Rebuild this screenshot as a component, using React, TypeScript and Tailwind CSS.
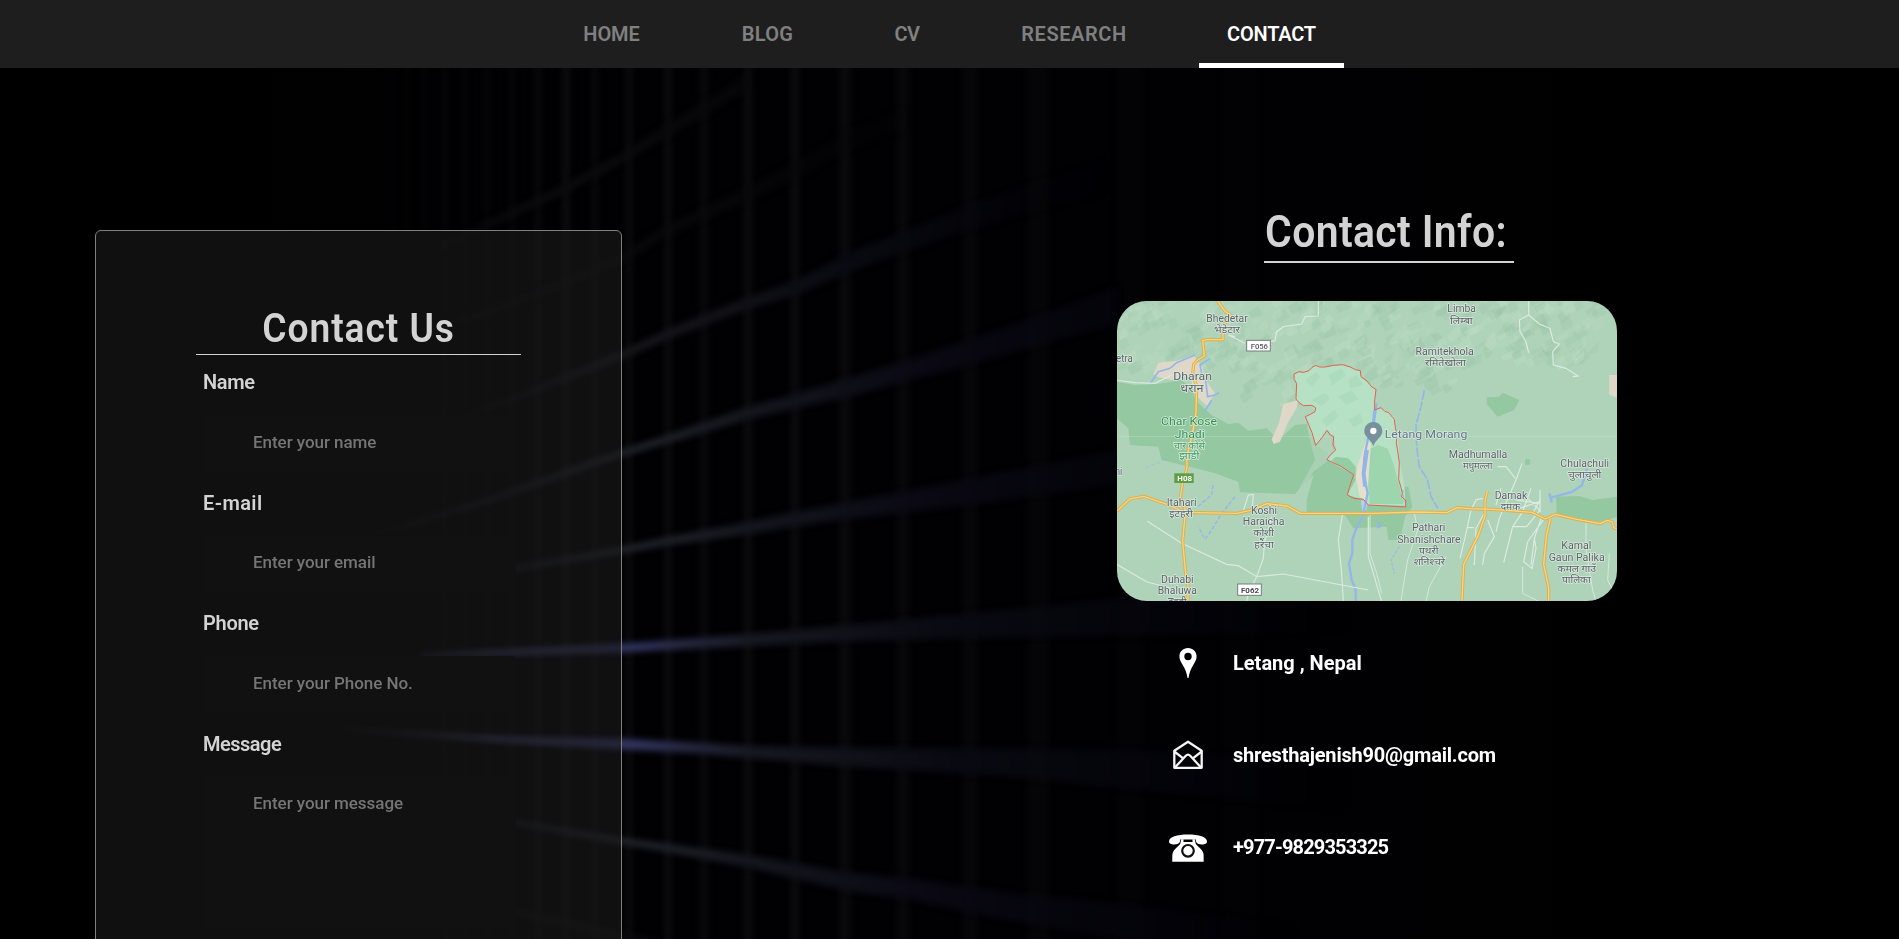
import React from "react";

type Point = [number, number, number];

const streaks: { points: Point[]; fill: string }[] = [
  { fill: "url(#beam-bright)", points: [[420, 656, 2], [515, 652, 3], [622, 648, 4], [700, 643, 5], [748, 640, 6], [850, 633, 8], [1000, 624, 13], [1120, 617, 18], [1350, 606, 26]] },
  { fill: "url(#beam-bright)", points: [[320, 727, 2], [400, 733, 2], [515, 740, 3], [622, 744, 5], [700, 748, 5], [750, 752, 6], [850, 757, 9], [1000, 762, 13], [1110, 768, 18], [1350, 785, 26]] },
  { fill: "url(#beam-mid)", points: [[490, 818, 2], [622, 841, 3], [668, 848, 4], [748, 861, 6], [850, 882, 9], [910, 889, 10], [1000, 905, 13], [1110, 920, 17], [1300, 950, 24]] },
  { fill: "url(#beam-mid)", points: [[490, 573, 2], [622, 550, 3], [668, 541, 4], [748, 528, 6], [795, 519, 7], [850, 510, 8], [950, 495, 12], [1100, 470, 16], [1300, 440, 22]] },
  { fill: "url(#beam-mid)", points: [[340, 545, 2], [480, 503, 2.5], [622, 453, 3], [668, 439, 4], [748, 413, 6], [795, 401, 7], [850, 387, 9], [905, 371, 10], [970, 352, 12], [1040, 330, 14], [1117, 305, 18]] },
  { fill: "url(#beam-soft)", points: [[440, 424, 2], [520, 396, 3], [622, 355, 4], [668, 334, 5], [748, 303, 6], [795, 288, 7], [850, 262, 9], [905, 241, 10], [970, 217, 12], [1040, 195, 14], [1110, 175, 16]] },
  { fill: "url(#beam-faint)", points: [[380, 345, 2], [480, 315, 3], [560, 285, 3], [622, 258, 4], [668, 230, 5], [748, 194, 7], [795, 170, 8], [850, 140, 9], [905, 118, 10]] },
  { fill: "url(#beam-faint)", points: [[430, 252, 2], [510, 214, 4], [570, 186, 4], [622, 158, 5], [668, 130, 6], [748, 82, 8]] },
  { fill: "url(#beam-faint)", points: [[500, 908, 3], [560, 922, 4], [622, 937, 5], [700, 955, 6]] },
];

const columns: [number, number, number][] = [
  [390, 4, 0.25], [407, 4, 0.3], [425, 4, 0.35], [445, 4, 0.45], [465, 4, 0.45], [487, 5, 0.55], [512, 5, 0.6],
  [538, 6, 0.8], [566, 7, 1], [595, 6, 0.8], [629, 6, 1], [668, 7, 0.95], [704, 9, 0.7], [748, 8, 0.9], [795, 8, 0.9],
  [845, 13, 0.7], [903, 12, 0.6], [970, 16, 0.45], [1038, 22, 0.35], [1130, 26, 0.2], [1240, 34, 0.15],
];

const beamShape = (points: Point[]) =>
  [...points.map(([x, y, r]) => `${x},${y - r}`), ...[...points].reverse().map(([x, y, r]) => `${x},${y + r}`)].join(" ");

function Backdrop() {
  return (
    <svg className="absolute inset-0 h-full w-full" viewBox="0 0 1899 939" preserveAspectRatio="none" aria-hidden="true">
      <defs>
        <linearGradient id="beam-bright" gradientUnits="userSpaceOnUse" x1="320" x2="1350" y1="0" y2="0">
          <stop offset="0" stopColor="#3c3e60" stopOpacity="0" />
          <stop offset="0.17" stopColor="#40436c" stopOpacity="0.85" />
          <stop offset="0.3" stopColor="#343766" />
          <stop offset="0.36" stopColor="#25273e" />
          <stop offset="0.42" stopColor="#171820" />
          <stop offset="0.6" stopColor="#0a0a13" />
          <stop offset="1" stopColor="#05060f" stopOpacity="0" />
        </linearGradient>
        <linearGradient id="beam-mid" gradientUnits="userSpaceOnUse" x1="340" x2="1300" y1="0" y2="0">
          <stop offset="0" stopColor="#2a2c38" stopOpacity="0" />
          <stop offset="0.28" stopColor="#282a32" />
          <stop offset="0.42" stopColor="#15171e" />
          <stop offset="0.6" stopColor="#0a0914" />
          <stop offset="1" stopColor="#06060f" stopOpacity="0" />
        </linearGradient>
        <linearGradient id="beam-soft" gradientUnits="userSpaceOnUse" x1="440" x2="1110" y1="0" y2="0">
          <stop offset="0" stopColor="#1c1c22" stopOpacity="0" />
          <stop offset="0.25" stopColor="#19181c" />
          <stop offset="0.6" stopColor="#0a0b12" />
          <stop offset="1" stopColor="#05050b" stopOpacity="0" />
        </linearGradient>
        <linearGradient id="beam-faint" gradientUnits="userSpaceOnUse" x1="380" x2="920" y1="0" y2="0">
          <stop offset="0" stopColor="#131317" stopOpacity="0" />
          <stop offset="0.35" stopColor="#0c0c0e" />
          <stop offset="1" stopColor="#060608" stopOpacity="0.2" />
        </linearGradient>
        <linearGradient id="haze" x1="0" x2="1" y1="0" y2="0">
          <stop offset="0" stopColor="#010104" stopOpacity="0" />
          <stop offset="0.25" stopColor="#010104" />
          <stop offset="0.7" stopColor="#010104" />
          <stop offset="1" stopColor="#010104" stopOpacity="0" />
        </linearGradient>
        <filter id="beam-blur" x="-5%" y="-40%" width="110%" height="180%" colorInterpolationFilters="sRGB">
          <feGaussianBlur stdDeviation="3" />
        </filter>
        <filter id="column-blur" filterUnits="userSpaceOnUse" x="300" y="0" width="1100" height="939" colorInterpolationFilters="sRGB">
          <feGaussianBlur stdDeviation="3 0.1" />
        </filter>
      </defs>
      <rect width="1899" height="939" fill="#000" />
      <rect x="220" width="1400" height="939" fill="url(#haze)" />
      <g filter="url(#column-blur)">
        {columns.map(([x, w, o]) => (
          <rect key={x} x={x - w / 2} y="40" width={w} height="899" fill="#0d0d0f" opacity={o} />
        ))}
      </g>
      {streaks.map(({ points, fill }) => (
        <polygon key={beamShape(points)} points={beamShape(points)} fill={fill} filter="url(#beam-blur)" />
      ))}
    </svg>
  );
}

function makeRelief() {
  let seed = 7;
  const next = () => {
    seed = (seed * 16807) % 2147483647;
    return seed / 2147483647;
  };
  const facets: { points: string; fill: string; opacity: number }[] = [];
  for (let i = 0; i < 380; i++) {
    const x = next() * 1430;
    const limit = x < 350 ? 220 : x < 700 ? 310 : x < 1000 ? 270 : 190;
    const y = Math.pow(next(), 1.15) * limit;
    const length = 18 + next() * 42;
    const width = 8 + next() * 18;
    const lean = -0.9 + next() * 0.5;
    const dx = Math.cos(lean) * length;
    const dy = Math.sin(lean) * length;
    facets.push({
      points: `${x},${y} ${x + dx},${y + dy} ${x + dx * 0.7 + width},${y + dy * 0.3 + width * 0.5} ${x + width * 0.6},${y + width}`,
      fill: next() > 0.5 ? "#9cc5a8" : "#bcdcc3",
      opacity: 0.2 + next() * 0.25,
    });
  }
  return facets;
}

const relief = makeRelief();

type Label = { x: number; y: number; w: number; text: string; size?: number; color?: string };

const labels: Label[] = [
  { x: 330, y: 62, w: 124, text: "Bhedetar" },
  { x: 330, y: 95, w: 78, text: "भेडेटार", size: 28 },
  { x: 22, y: 182, w: 50, text: "etra" },
  { x: 227, y: 236, w: 116, text: "Dharan", size: 34 },
  { x: 225, y: 273, w: 70, text: "धरान", size: 32 },
  { x: 216, y: 371, w: 168, text: "Char Kose", size: 34, color: "#2f9150" },
  { x: 218, y: 411, w: 90, text: "Jhadi", size: 34, color: "#2f9150" },
  { x: 217, y: 443, w: 94, text: "चार कोसे", size: 28, color: "#3f9a5d" },
  { x: 217, y: 474, w: 60, text: "झाडी", size: 28, color: "#3f9a5d" },
  { x: 5, y: 522, w: 22, text: "ni" },
  { x: 194, y: 615, w: 90, text: "Itahari" },
  { x: 192, y: 647, w: 70, text: "इटहरी", size: 30 },
  { x: 441, y: 639, w: 78, text: "Koshi" },
  { x: 440, y: 673, w: 125, text: "Haraicha" },
  { x: 440, y: 706, w: 62, text: "कोशी", size: 30 },
  { x: 441, y: 741, w: 58, text: "हरैंचा", size: 30 },
  { x: 181, y: 845, w: 98, text: "Duhabi" },
  { x: 181, y: 880, w: 118, text: "Bhaluwa" },
  { x: 181, y: 911, w: 56, text: "दुहवी", size: 30 },
  { x: 1034, y: 34, w: 86, text: "Limba" },
  { x: 1033, y: 68, w: 68, text: "लिम्बा", size: 30 },
  { x: 983, y: 161, w: 175, text: "Ramitekhola" },
  { x: 985, y: 194, w: 122, text: "रमितेखोला", size: 30 },
  { x: 927, y: 412, w: 248, text: "Letang Morang", size: 34, color: "#61758a" },
  { x: 1083, y: 471, w: 176, text: "Madhumalla" },
  { x: 1082, y: 504, w: 88, text: "मधुमल्ला", size: 30 },
  { x: 1403, y: 497, w: 146, text: "Chulachuli" },
  { x: 1403, y: 530, w: 100, text: "चुलाचुली", size: 30 },
  { x: 1182, y: 594, w: 98, text: "Damak" },
  { x: 1180, y: 627, w: 58, text: "दमक", size: 30 },
  { x: 935, y: 691, w: 100, text: "Pathari" },
  { x: 936, y: 725, w: 190, text: "Shanishchare" },
  { x: 935, y: 758, w: 58, text: "पथरी", size: 30 },
  { x: 937, y: 792, w: 94, text: "शनिश्चरे", size: 30 },
  { x: 1378, y: 745, w: 90, text: "Kamal" },
  { x: 1379, y: 779, w: 168, text: "Gaun Palika" },
  { x: 1379, y: 812, w: 116, text: "कमल गाउँ", size: 30 },
  { x: 1378, y: 846, w: 86, text: "पालिका", size: 30 },
];

function RegionMap() {
  return (
    <svg className="block h-[300px] w-[500px] rounded-[30px]" viewBox="0 0 1500 900" role="img">
      <rect width="1500" height="900" fill="#aed3b9" />
      {relief.map((f, i) => (
        <polygon key={i} points={f.points} fill={f.fill} opacity={f.opacity} />
      ))}

      <g transform="translate(-6 -3)">
        <path d="M0 245 L60 255 130 252 200 240 232 268 240 300 290 345 340 372 370 368 400 392 455 385 490 420 540 375 575 372 600 432 640 460 610 510 560 560 540 582 375 577 370 545 300 520 225 500 140 480 130 440 45 435 40 385 0 350Z" fill="#93c8a1" />
        <path d="M575 600 L600 510 640 470 720 500 760 560 880 560 892 620 870 650 855 720 820 720 815 680 715 685 690 645 575 635Z" fill="#93c8a1" />
        <path d="M575 380 L640 400 655 470 595 515 555 590 540 600 555 560 600 480Z" fill="#aed3b9" opacity=".8" />
        <path d="M130 188 L185 182 235 165 262 200 272 240 300 280 276 318 240 285 225 225 170 240 130 232 115 222Z" fill="#dfd8c9" />
        <path d="M505 312 L550 300 545 325 520 365 495 425 476 432 470 418 492 370Z" fill="#dfd8c9" />
        <path d="M537 222 L582 212 602 196 630 201 682 194 736 212 738 230 783 268 779 330 798 323 838 350 850 420 853 480 868 555 872 617 760 615 745 598 697 585 716 524 635 479 662 450 656 410 636 391 602 436 571 350 600 335 590 316 565 317 543 297 545 250Z" fill="#b7e1c5" />
        <g fill="#a8d7b8" opacity=".65">
          <path d="M570 240l35-25 10 15-25 30zM640 225l40-20 12 20-40 32zM700 240l25-15 20 30-40 10zM590 300l40-22 15 18-25 22zM670 290l40-20 20 28-36 16zM620 360l38-30 12 20-35 30zM700 360l35-20 10 26-30 16z" />
        </g>
        <path d="M762 448 L790 435 818 446 835 490 850 545 866 612 765 612 760 560Z" fill="#9dd6ae" />
        <path d="M662 470 L700 475 722 500 722 540 700 580 716 524 650 482Z" fill="#93cda4" />
        <path d="M754 420 L730 490 722 530 735 590 750 600 760 540 768 430Z" fill="#e6dfcd" />
        <path d="M738 600l20 5-4 25-12 5z" fill="#b9d2ef" />
        <g fill="none" stroke="#93b6ea" strokeWidth="5">
          <path d="M778 330 L774 370 758 420 748 470 745 520 758 580 748 625 742 650 722 690 712 720 712 760 702 790 710 840 722 870 722 905" strokeWidth="7" />
          <path d="M756 450 L746 520 750 560" strokeWidth="12" />
          <path d="M105 252 L130 215 165 205 185 188 240 165M286 175L255 195 262 230M272 240L278 290 300 285 312 278M290 300L268 336" />
          <path d="M294 555 L290 585 248 620M360 590L320 640 290 690 270 718 250 680" strokeWidth="4" strokeDasharray="12 6" />
          <path d="M92 502 L140 485 190 430 240 395" strokeWidth="2" strokeDasharray="10 8" />
        </g>
        <path d="M785 310l-8 60" stroke="#93b6ea" strokeWidth="6" />
        <path d="M788 662l12 18-14 6z" fill="#93b6ea" />
        <g fill="none" stroke="#dbeadf" strokeWidth="3.5">
          <path d="M610 0 L610 48 570 50 560 72 505 80 485 95 480 122 430 135M0 240L60 248 120 250 170 225M360 110L340 105 390 130" />
          <path d="M97 664 L200 730 335 793 370 797 425 830 505 822 760 870M0 790L96 846 190 870M425 830L445 775 448 730 470 650M425 830L400 880 395 905M682 645L670 720 680 820 685 905M385 632L400 585 415 583 412 625M760 650L760 770 775 820 800 905" />
        </g>
      </g>

      <g transform="translate(747 -3)">
        <path d="M570 590 L640 588 680 600 756 590 756 650 700 665 640 655 572 640Z" fill="#93c8a1" />
        <path d="M362 292 L400 290 410 278 460 300 445 330 395 350 362 312Z" fill="#93c8a1" />
        <path d="M730 225h30v70l-30-10z" fill="#dfd8c9" />
        <path d="M478 478h14v16h-14z" fill="#93c8a1" />
        <g fill="none" stroke="#dfeae3" strokeWidth="3.5">
          <path d="M488 0 L488 45 460 60 462 95 480 125 488 158M488 45L520 72 552 85 562 125 580 132 560 155 562 195 600 205 636 228 620 230" />
          <path d="M468 490 L450 540 400 655 390 695M395 500l25 0 28 35M350 595l-20 5-15 30-15 70-18 75M355 640l-25 45-5 110M302 683h22M365 660l20 50-30 50-5 35M405 565l-15 50M495 565l-25 70-30 45-15 60-12 48M522 570v60l-40 50-40 0M525 655l-20 60-10 80M535 655l-50 70-12 60 25 20 12-60-5-30M450 600l70 10M460 625l60-20M480 590l45 45M500 640l25-45" />
          <path d="M145 640l10 50-30 90-15 90-5 35M240 770l-50 90-10 45M12 640v120l20 60 15 60M470 800l0 80 50 25M660 670v80l20 120 10 35M730 760l-5 80 25 50" strokeWidth="2.5" />
        </g>
        <g fill="none" stroke="#93b6ea" strokeWidth="5">
          <path d="M175 270 L165 320 150 375 152 440 160 500 185 540 195 590 215 625" strokeDasharray="30 5" />
          <path d="M550 580l8 28M558 592l60-16 30-20 15-50" strokeWidth="7" />
          <path d="M110 570l5 40M100 740l-25 40 10 40" strokeWidth="3" strokeDasharray="9 5" />
        </g>
      </g>
      <path d="M0 406H1500" stroke="#cfe3d3" strokeWidth="2" opacity=".6" />

      <g fill="none" strokeLinejoin="round">
        {["#e0ae45", "#f4d68a"].map((stroke, i) => (
          <g key={stroke} stroke={stroke} strokeWidth={i ? 4 : 9.5}>
            <path d="M302 0 L325 32 345 45 322 68 318 100 318 116 270 116 257 118 262 165 244 175 230 190 227 220 239 255 237 335 226 400 210 465 210 500 196 550 190 590 203 620 203 655 197 720 205 810 213 850 213 900" />
            <path d="M0 630 L38 594 80 586 150 610 203 634 360 637 400 628 450 608 510 615 550 637 770 637 900 633 990 635 1020 620 1060 623 1130 625 1245 634 1285 654 1315 640 1380 655 1450 668 1470 658 1485 662 1490 680 1500 684" />
            <path d="M1111 570 L1104 600 1104 645 1085 700 1040 790 1035 900M1300 652L1288 705 1280 790 1295 860 1295 900" />
          </g>
        ))}
      </g>
      <path d="M531 219 L545 212 560 214 576 209 585 199 596 193 608 198 624 198 650 193 676 191 700 198 715 206 730 209 732 227 750 240 765 258 777 265 773 300 773 327 792 320 803 331 815 335 832 355 835 380 840 400 838 425 842 450 847 485 845 535 856 575 854 588 866 597 866 618 754 612 739 595 710 592 691 582 697 560 710 521 670 495 629 476 640 462 656 447 648 432 650 407 640 402 630 388 615 410 596 433 585 395 565 347 580 340 594 332 596 320 584 313 559 314 545 304 537 294 539 247 531 235Z" fill="none" stroke="#e2604f" strokeWidth="3" />

      <g fontFamily="Roboto, 'Noto Sans', sans-serif" textAnchor="middle" fontWeight="400">
        {labels.map(({ x, y, w, text, size = 30, color = "#5c6168" }) => (
          <text key={text} x={x} y={y} textLength={w} lengthAdjust="spacingAndGlyphs" fontSize={size} fill={color} stroke="#dcebe0" strokeWidth="4" strokeLinejoin="round" paintOrder="stroke">
            {text}
          </text>
        ))}
        <g fontSize="24" fontWeight="700">
          <rect x="389" y="118" width="71" height="32" fill="#fff" stroke="#777b80" strokeWidth="3" />
          <text x="427" y="143" fill="#55595e" textLength="52" lengthAdjust="spacingAndGlyphs" fontWeight="500">F056</text>
          <rect x="362" y="849" width="71" height="34" fill="#fff" stroke="#777b80" strokeWidth="3" />
          <text x="399" y="875" fill="#44484d" textLength="54" lengthAdjust="spacingAndGlyphs">F062</text>
          <rect x="172" y="517" width="58" height="29" fill="#5f9e44" />
          <text x="203" y="541" fill="#fff" textLength="44" lengthAdjust="spacingAndGlyphs">H08</text>
        </g>
      </g>
      <path d="M769 363c-16 0-27 12-27 27 0 19 20 24 27 46 7-22 27-27 27-46 0-15-11-27-27-27z" fill="#76909c" />
      <circle cx="769" cy="390" r="9.5" fill="#fff" />
    </svg>
  );
}

const PinIcon = () => (
  <svg width="18" height="30" viewBox="0 0 18 30">
    <path fillRule="evenodd" fill="#fff" d="M9 0C4 0 .4 3.700.4 8.400c0 3 1.600 5.600 3.200 8.300C6 20.800 7.900 25 8.500 30h1c.6-5 2.500-9.200 4.900-13.300 1.600-2.700 3.200-5.300 3.200-8.300C17.600 3.700 14 0 9 0zm0 4.800a3.700 3.700 0 1 1 0 7.400 3.700 3.700 0 0 1 0-7.400z" />
  </svg>
);

const MailIcon = () => (
  <svg width="30" height="30" viewBox="0 0 30 30" fill="none" stroke="#f5f5f5" strokeWidth="2.3" strokeLinejoin="round">
    <path d="M1.300 10.700 15 1.700l13.700 9v17.100H1.300z" />
    <path d="M1.300 11.500 10.800 18.800M28.700 11.500 19.200 18.800M2.200 27.200 12.800 15.800Q15 13.500 17.200 15.800L27.800 27.200" />
  </svg>
);

const PhoneIcon = () => (
  <svg width="38" height="28" viewBox="0 0 38 28">
    <path fill="#fff" d="M0 7.500C0 2.500 8 .4 19 .4S38 2.500 38 7.500c0 2.500-2.500 3-5 2.900-3 0-5.600-.6-6-2.800l-.3-2H11.300L11 7.600c-.4 2.200-3 2.700-6 2.800-2.500.1-5-.4-5-2.900z" />
    <path fill="#fff" d="M12.300 5.300h2.200v2.600h9V5.300h2.200l1 4.200c.8 2.300 6.300 5.200 7.600 9.500.4 1.500.4 3 .4 8.800H3.300c0-5.800 0-7.300.4-8.800 1.300-4.300 6.800-7.200 7.600-9.500z" />
    <circle cx="19" cy="16.800" r="5.800" fill="#fff" stroke="#111" strokeWidth="2.200" />
  </svg>
);

const navItems = [
  { label: "HOME", width: "w-[113px]", spacing: "pl-[3px] tracking-[-0.1px]" },
  { label: "BLOG", width: "w-[108px]", spacing: "pl-[4px] tracking-[0.3px]" },
  { label: "CV", width: "w-[82px]", spacing: "pl-[3px] tracking-[-0.5px]" },
  { label: "RESEARCH", width: "w-[162px]", spacing: "pl-[3px] tracking-[0.6px]" },
  { label: "CONTACT", width: "w-[145px]", spacing: "pl-[1px] tracking-[-0.2px]" },
];

const fields = [
  { label: "Name", placeholder: "Enter your name", spacing: "tracking-[-0.3px]" },
  { label: "E-mail", placeholder: "Enter your email", spacing: "tracking-[0.4px]" },
  { label: "Phone", placeholder: "Enter your Phone No.", spacing: "tracking-[-0.3px]" },
];

const contacts = [
  { icon: <PinIcon />, text: "Letang , Nepal", spacing: "tracking-[0px]" },
  { icon: <MailIcon />, text: "shresthajenish90@gmail.com", spacing: "tracking-[-0.2px]" },
  { icon: <PhoneIcon />, text: "+977-9829353325", spacing: "tracking-[-0.85px]" },
];

const labelClass = "flex h-[60px] items-center pb-[6px] text-[20px] font-semibold text-[#d3d3d3]";
const inputClass = "block w-[313px] rounded-[3px] bg-[#111111] pl-[50px] text-[17px] font-medium tracking-[-0.05px] text-[#d3d3d3] outline-none placeholder:text-[#757575]";

export default function App() {
  return (
    <div className="relative flex h-[939px] w-full flex-col overflow-hidden bg-black font-[Roboto,'Liberation_Sans',sans-serif]">
      <Backdrop />
      <nav className="relative flex h-[68px] shrink-0 justify-center gap-[45px] bg-[#1e1e1e] pr-[2px]">
        {navItems.map(({ label, width, spacing }) => (
          <a
            key={label}
            className={`${width} ${spacing} flex items-center justify-center border-b-[5px] pt-[5px] text-[20px] font-semibold ${label === "CONTACT" ? "border-white text-white" : "border-transparent text-[#808080]"}`}
          >
            {label}
          </a>
        ))}
      </nav>

      <main className="relative flex items-start pl-[95px]">
        <form className="mt-[162px] h-[860px] w-[527px] shrink-0 rounded-[6px] border border-[#808080] bg-[#1c1c1c94] px-[100px] pt-[70px]">
          <h2 className="flex h-[54px] w-[325px] items-center justify-center border-b border-[#d3d3d3] pt-[3px] text-[40px] font-semibold tracking-[1px] text-[#d3d3d3]">
            <span className="inline-block scale-x-[0.93]">Contact Us</span>
          </h2>
          <div className="pl-[7px]">
            {fields.map(({ label, placeholder, spacing }) => (
              <div key={label} className="mb-[3.67px]">
                <label className={`${labelClass} ${spacing}`}>{label}</label>
                <input className={`${inputClass} h-[57px] pb-[4px]`} placeholder={placeholder} />
              </div>
            ))}
            <label className={`${labelClass} tracking-[-0.5px]`}>Message</label>
            <textarea className={`${inputClass} h-[150px] resize-none pt-[14px] leading-[24px]`} placeholder="Enter your message" />
          </div>
        </form>

        <section className="ml-[495px] mt-[135px] w-[500px] shrink-0">
          <h2 className="ml-[147px] flex h-[60px] w-[250px] items-center whitespace-nowrap border-b-2 border-[#d3d3d3] pl-[1px] text-[44px] font-semibold tracking-[0.4px] text-[#d3d3d3]">
            <span className="inline-block origin-left scale-x-[0.93]">Contact Info:</span>
          </h2>
          <div className="mt-[38px]">
            <RegionMap />
          </div>
          <ul className="mt-[16px]">
            {contacts.map(({ icon, text, spacing }) => (
              <li key={text} className="flex h-[92.3px] items-center pl-[41px] text-[20px] font-bold text-white">
                <span className="flex w-[60px] justify-center">{icon}</span>
                <span className={`ml-[15px] pb-[1px] ${spacing}`}>{text}</span>
              </li>
            ))}
          </ul>
        </section>
      </main>
    </div>
  );
}
